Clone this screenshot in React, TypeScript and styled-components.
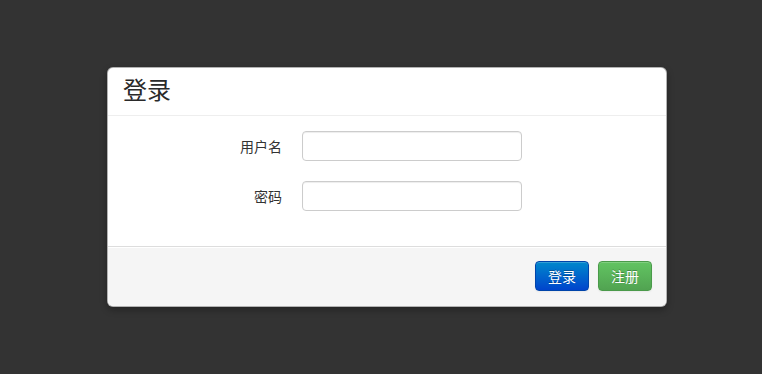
import * as React from "react";
import styled, { createGlobalStyle } from "styled-components";

const GlobalStyle = createGlobalStyle`
  html, body {
    margin: 0;
    padding: 0;
    background: #333333;
    font-family: "Liberation Sans", "Noto Sans CJK SC", sans-serif;
    font-size: 14px;
    color: #333333;
  }
`;

const Backdrop = styled.div`
  width: 762px;
  height: 374px;
  box-sizing: border-box;
  padding: 67px 0 0 107px;
`;

const Modal = styled.div`
  width: 560px;
  box-sizing: border-box;
  background: #ffffff;
  border: 1px solid rgba(0, 0, 0, 0.3);
  border-radius: 6px;
  box-shadow: 0 3px 7px rgba(0, 0, 0, 0.3);
  overflow: hidden;
`;

const Header = styled.div`
  padding: 6px 15px 11px;
  border-bottom: 1px solid #eeeeee;
`;

const Title = styled.h3`
  margin: 0;
  font-family: "Noto Sans CJK SC", sans-serif;
  font-size: 24px;
  font-weight: 400;
  line-height: 30px;
  color: #2a2a2a;
`;

const Body = styled.form`
  padding: 15px 15px 15px 14px;
  margin: 0;
`;

const Row = styled.div`
  display: flex;
  align-items: center;
  margin-bottom: 20px;
`;

const Label = styled.label`
  width: 160px;
  text-align: right;
  margin-right: 20px;
  font-family: "Noto Sans CJK SC", sans-serif;
  font-size: 14px;
  color: #333333;
`;

const Input = styled.input`
  width: 220px;
  height: 30px;
  box-sizing: border-box;
  padding: 4px 6px;
  border: 1px solid #cccccc;
  border-radius: 4px;
  box-shadow: inset 0 1px 1px rgba(0, 0, 0, 0.075);
  font-size: 14px;
  outline: none;
`;

const Footer = styled.div`
  display: flex;
  justify-content: flex-end;
  gap: 9px;
  padding: 14px 14px 15px;
  background: #f5f5f5;
  border-top: 1px solid #dddddd;
  box-shadow: inset 0 1px 0 #ffffff;
`;

const Button = styled.button<{ $variant: "primary" | "success" }>`
  height: 30px;
  padding: 0 12px;
  border-radius: 4px;
  font-family: "Noto Sans CJK SC", sans-serif;
  font-size: 14px;
  line-height: 20px;
  color: #ffffff;
  text-shadow: 0 -1px 0 rgba(0, 0, 0, 0.25);
  cursor: pointer;
  box-shadow: inset 0 1px 0 rgba(255, 255, 255, 0.2),
    0 1px 2px rgba(0, 0, 0, 0.05);
  border: 1px solid
    ${(p) => (p.$variant === "primary" ? "#0044aa" : "#4a9a4a")};
  background: ${(p) =>
    p.$variant === "primary"
      ? "linear-gradient(to bottom, #0088cc, #0044cc)"
      : "linear-gradient(to bottom, #62c462, #51a351)"};
`;

export default function App() {
  return (
    <>
      <GlobalStyle />
      <Backdrop>
        <Modal>
          <Header>
            <Title>登录</Title>
          </Header>
          <Body onSubmit={(e) => e.preventDefault()}>
            <Row>
              <Label>用户名</Label>
              <Input type="text" />
            </Row>
            <Row>
              <Label>密码</Label>
              <Input type="password" />
            </Row>
          </Body>
          <Footer>
            <Button $variant="primary">登录</Button>
            <Button $variant="success">注册</Button>
          </Footer>
        </Modal>
      </Backdrop>
    </>
  );
}
